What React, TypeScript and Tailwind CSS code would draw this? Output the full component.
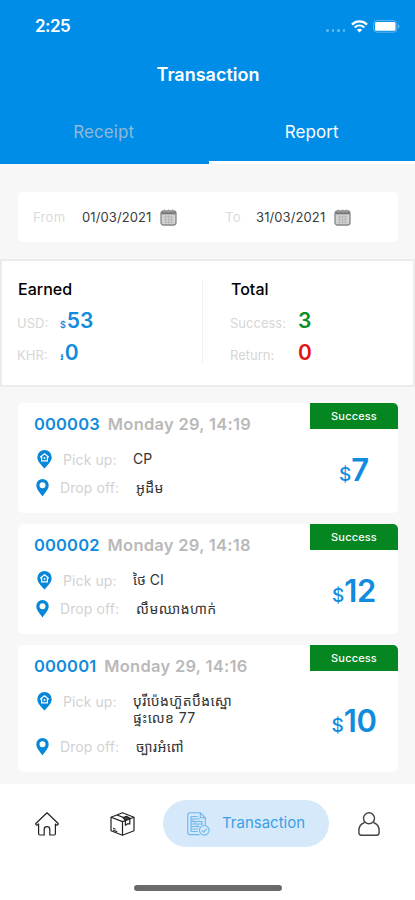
import clsx from "clsx";

type Order = {
  id: string;
  date: string;
  pickUp: string[];
  dropOff: string;
  price: number;
};

const orders: Order[] = [
  { id: "000003", date: "Monday 29, 14:19", pickUp: ["CP"], dropOff: "អូដឹម", price: 7 },
  { id: "000002", date: "Monday 29, 14:18", pickUp: ["ថៃ CI"], dropOff: "លឹមឈាងហាក់", price: 12 },
  { id: "000001", date: "Monday 29, 14:16", pickUp: ["បុរីប៉េងហ៊ួតបឹងស្នោ", "ផ្ទះលេខ 77"], dropOff: "ច្បារអំពៅ", price: 10 },
];

const StatusBar = () => (
  <div className="flex h-[52px] items-center justify-between pl-[35px] pr-[15px]">
    <span className="text-[17px] font-semibold leading-none tracking-[-0.5px]">2:25</span>
    <div className="flex items-center">
      <div className="mr-[6px] mt-[8px] flex gap-[3px]">
        {[...Array(4)].map((_, i) => (
          <div key={i} className="h-[3px] w-[2.5px] rounded-full bg-white/40" />
        ))}
      </div>
      <svg width="17" height="13" viewBox="0 0 17 13" fill="none" stroke="white" strokeWidth="2.2">
        <path d="M1 4.6C5.2.4 11.8.4 16 4.6" />
        <path d="M3.7 7.5c2.8-2.7 6.8-2.7 9.6 0" />
        <path d="M8.5 12.4 5.8 9.7c1.5-1.4 3.9-1.4 5.4 0z" fill="white" stroke="none" />
      </svg>
      <svg className="ml-[5px]" width="27" height="13" viewBox="0 0 27 13">
        <rect x=".6" y=".6" width="23.3" height="11.6" rx="3.2" fill="none" stroke="white" strokeOpacity=".35" />
        <rect x="2" y="2" width="20.5" height="8.8" rx="1.5" fill="white" />
        <path d="M25.2 4.3c1.7.8 1.7 3.4 0 4.2z" fill="white" fillOpacity=".5" />
      </svg>
    </div>
  </div>
);

const CalendarIcon = () => (
  <svg width="17" height="17" viewBox="0 0 17 17" fill="none">
    <rect x="1" y="2" width="15" height="14" rx="2.5" fill="#d2d2d2" stroke="#858585" strokeWidth="1.3" />
    <path d="M1.5 4.2h14" stroke="#777" strokeWidth="2.2" />
    <path d="M4.5.5v3.2M8.5.5v3.2M12.5.5v3.2" stroke="#999" strokeWidth="1.2" />
    <path d="M4 8h9M4 10.7h9M4 13.3h9M5.5 6.5v8M8.5 6.5v8M11.5 6.5v8" stroke="#b0b0b0" strokeWidth=".7" />
  </svg>
);

const PickUpIcon = () => (
  <svg width="15" height="19" viewBox="0 0 15 19">
    <path d="M7.5 0A7.2 7.2 0 0 0 .3 7.2c0 4.3 4 7.6 7.2 11.3 3.2-3.7 7.2-7 7.2-11.3A7.2 7.2 0 0 0 7.5 0z" fill="#0687d8" />
    <path d="m3.2 7.2 4.3-3.4 4.3 3.4M4.6 6.6v4.2h5.8V6.6" fill="none" stroke="white" strokeWidth="1.2" />
    <circle cx="7.5" cy="8" r=".9" fill="white" />
  </svg>
);

const DropOffIcon = () => (
  <svg width="13" height="18" viewBox="0 0 13 18">
    <path
      fillRule="evenodd"
      d="M6.5 0A6.2 6.2 0 0 0 .3 6.3c0 4 3.8 7.4 6.2 11.2 2.4-3.8 6.2-7.2 6.2-11.2A6.2 6.2 0 0 0 6.5 0zm0 3.3a3 3 0 1 1 0 6 3 3 0 0 1 0-6z"
      fill="#0687d8"
    />
  </svg>
);

const HomeIcon = () => (
  <svg width="24" height="24" viewBox="0 0 24 24" fill="none" stroke="#222" strokeWidth="1.2" strokeLinejoin="round">
    <path d="M12 .8 1.1 11.2c-.9 1 .3 2.4 1.4 1.7L3.6 12v9.8c0 .7.4 1.2 1.2 1.2h4.4v-5.7c0-3.6 5.6-3.6 5.6 0V23h4.4c.8 0 1.2-.5 1.2-1.2V12l1.1.9c1.1.7 2.3-.7 1.4-1.7z" />
  </svg>
);

const BoxIcon = () => (
  <svg width="25" height="24" viewBox="0 0 25 24" fill="none" stroke="#222" strokeWidth="1.2" strokeLinejoin="round">
    <path d="M12.5.8 24 5.2v13.6l-11.5 4.4L1 18.8V5.2z" />
    <path d="M1 5.2l11.5 4.4L24 5.2M12.5 9.6v13.6" />
    <path d="m7 3 8.8 3.4M15.4 8.6v4.6l1.9-1.3 2.5 0V6.8" />
    <path d="m13 5.8 3.4-1.4 3.6 1.9-4.2 2z" fill="#444" />
    <path d="m3.2 16.3 2.3.9M3.2 18.2l4 1.5" />
  </svg>
);

const ReportIcon = () => (
  <svg width="23" height="24" viewBox="0 0 23 24" fill="none" stroke="#6db5ea" strokeWidth="1.1">
    <path d="M12.5 22.6H3A2.2 2.2 0 0 1 .8 20.4V3A2.2 2.2 0 0 1 3 .8h10.3l5 5v7.8" />
    <path d="M13.3.8v5h5" />
    <path d="M3.7 4.5h7M3.7 7h9M3.7 9.5h11.5M3.7 12h11M3.7 14.5h8.5M3.7 17h7.5M3.7 19.5h7M4 4v15.5M15 9v4" />
    <path d="m5.5 8 7 7.5" strokeOpacity=".5" />
    <circle cx="17.3" cy="18.3" r="4.8" fill="#d5e9fb" />
    <path d="m14.8 18.3 1.8 1.8 3.3-3.5" />
  </svg>
);

const UserIcon = () => (
  <svg width="22" height="24" viewBox="0 0 22 24" fill="none" stroke="#444" strokeWidth="1.4">
    <circle cx="11" cy="6.3" r="5.5" />
    <path d="M6.5 10.5C3.3 11.7.9 14.8.9 18.6v2.2c0 1.5.8 2.4 2.3 2.4h15.6c1.5 0 2.3-.9 2.3-2.4v-2.2c0-3.8-2.4-6.9-5.6-8.1" />
  </svg>
);

function DateField({ label, value, className }: { label: string; value: string; className: string }) {
  return (
    <div className={clsx("flex items-center text-[13px] leading-none", className)}>
      <span className="flex-1 tracking-[0.3px] text-[#dadada]">{label}</span>
      <span className="w-[78px] tracking-[0.1px] text-[#3c3c3c]">{value}</span>
      <CalendarIcon />
    </div>
  );
}

function OrderCard({ order }: { order: Order }) {
  const tall = order.pickUp.length > 1;
  return (
    <div className={clsx("flex rounded-[5px] bg-white", tall ? "h-[127px]" : "h-[110px]")}>
      <div className="min-w-0 flex-1 pl-[16px] pt-[11px]">
        <div className="flex h-5 items-center gap-[8px] whitespace-nowrap text-[16.5px] font-semibold leading-none">
          <span className="tracking-[0.15px] text-[#118bdd]">{order.id}</span>
          <span className="tracking-[0.27px] text-[#b9b9b9]">{order.date}</span>
        </div>
        <div className={clsx("mt-[16px] flex pl-[3px]", tall ? "h-[37px]" : "h-[20px]")}>
          <PickUpIcon />
          <span className="ml-[11px] w-[70px] text-[14px] leading-[19px] tracking-[0.1px] text-[#d2d2d2]">Pick up:</span>
          <div className="whitespace-nowrap text-[14px] leading-[16px] text-[#333]">
            {order.pickUp.map((line) => (
              <div key={line} className={clsx("pt-px", tall && "tracking-[0.4px]")}>{line}</div>
            ))}
          </div>
        </div>
        <div className="mt-[9px] flex h-[18px] items-center pl-[2px]">
          <DropOffIcon />
          <span className="ml-[11px] w-[76px] text-[14px] leading-none tracking-[0.1px] text-[#d2d2d2]">Drop off:</span>
          <span className="whitespace-nowrap text-[14px] leading-none tracking-[0.4px] text-[#333]">{order.dropOff}</span>
        </div>
      </div>
      <div className="flex w-[88px] shrink-0 flex-col items-center">
        <div className="flex h-[26px] w-full items-center justify-center rounded-tr-[5px] bg-[#058620] text-[11px] font-medium tracking-[0.15px] text-white">
          Success
        </div>
        <div className={clsx("flex items-baseline font-semibold leading-none text-[#118bdd]", tall ? "mt-[34px]" : "mt-[25px]")}>
          <span className="text-[19px] font-medium">$</span>
          <span className="text-[31px] tracking-[-0.3px]">{order.price}</span>
        </div>
      </div>
    </div>
  );
}

export default function App() {
  return (
    <div className="flex h-[900px] w-[415px] flex-col overflow-hidden bg-[#f7f7f7] font-['Inter','Noto_Sans_Khmer','Noto_Sans',sans-serif]">
      <header className="flex h-[164px] shrink-0 flex-col bg-[#008de7] text-white">
        <StatusBar />
        <h1 className="pl-px pt-[12px] text-center text-[18px] font-semibold leading-[22px]">Transaction</h1>
        <div className="mt-auto grid h-[64px] grid-cols-2 text-center text-[17px] leading-[64px] tracking-[0.1px]">
          <div className="text-[#8fb9d9]">Receipt</div>
          <div className="ml-px h-[64px] rounded-t-[3px] border-b-[3px] border-white">Report</div>
        </div>
      </header>

      <section className="ml-[18px] mr-[17px] mt-[28px] flex h-[50px] shrink-0 items-center rounded-[5px] bg-white pl-[15px]">
        <DateField label="From" value="01/03/2021" className="w-[144px]" />
        <DateField label="To" value="31/03/2021" className="ml-[48px] w-[126px]" />
      </section>

      <section className="mt-[17px] flex h-[128px] shrink-0 border-2 border-[#ececec] bg-white pl-[15px] pt-[18px]">
        <div className="h-[84px] w-[186px] border-r border-[#f2f2f2]">
          <h2 className="pl-px text-[16px] font-medium leading-[20px]">Earned</h2>
          <div className="mt-[6px] flex h-[32px] items-center">
            <span className="w-[43px] pt-[6px] text-[13px] text-[#d6d6d6]">USD:</span>
            <span className="flex items-baseline text-[21px] font-semibold text-[#118bdd]">
              <span className="mr-px text-[9px]">$</span>53
            </span>
          </div>
          <div className="flex h-[32px] items-center">
            <span className="w-[43px] pt-[6px] text-[13px] text-[#d6d6d6]">KHR:</span>
            <span className="flex items-baseline text-[21px] font-semibold text-[#118bdd]">
              <span className="mr-px text-[10px]">៛</span>0
            </span>
          </div>
        </div>
        <div className="pl-[27px]">
          <h2 className="pl-px text-[16px] font-medium leading-[20px]">Total</h2>
          <div className="mt-[6px] flex h-[32px] items-center">
            <span className="w-[68px] pt-[6px] text-[13px] text-[#d6d6d6]">Success:</span>
            <span className="text-[21px] font-semibold text-[#0b8f28]">3</span>
          </div>
          <div className="flex h-[32px] items-center">
            <span className="w-[68px] pt-[6px] text-[13px] text-[#d6d6d6]">Return:</span>
            <span className="text-[21px] font-semibold text-[#e01515]">0</span>
          </div>
        </div>
      </section>

      <main className="ml-[18px] mr-[17px] mt-[16px] flex flex-1 flex-col gap-[11px]">
        {orders.map((order) => (
          <OrderCard key={order.id} order={order} />
        ))}
      </main>

      <footer className="h-[116px] shrink-0 bg-white pt-[16px]">
        <nav className="flex h-[47px] items-center pl-[35px]">
          <HomeIcon />
          <div className="ml-[51px]"><BoxIcon /></div>
          <div className="ml-[28px] flex h-[47px] w-[166px] items-center gap-[12px] rounded-full bg-[#d5e9fb] pl-[24px] text-[15px] text-[#3b9fe5]">
            <ReportIcon />
            Transaction
          </div>
          <div className="ml-[29px]"><UserIcon /></div>
        </nav>
        <div className="mx-auto mt-[38px] h-[6px] w-[148px] rounded-full bg-[#6b6b6b]" />
      </footer>
    </div>
  );
}
